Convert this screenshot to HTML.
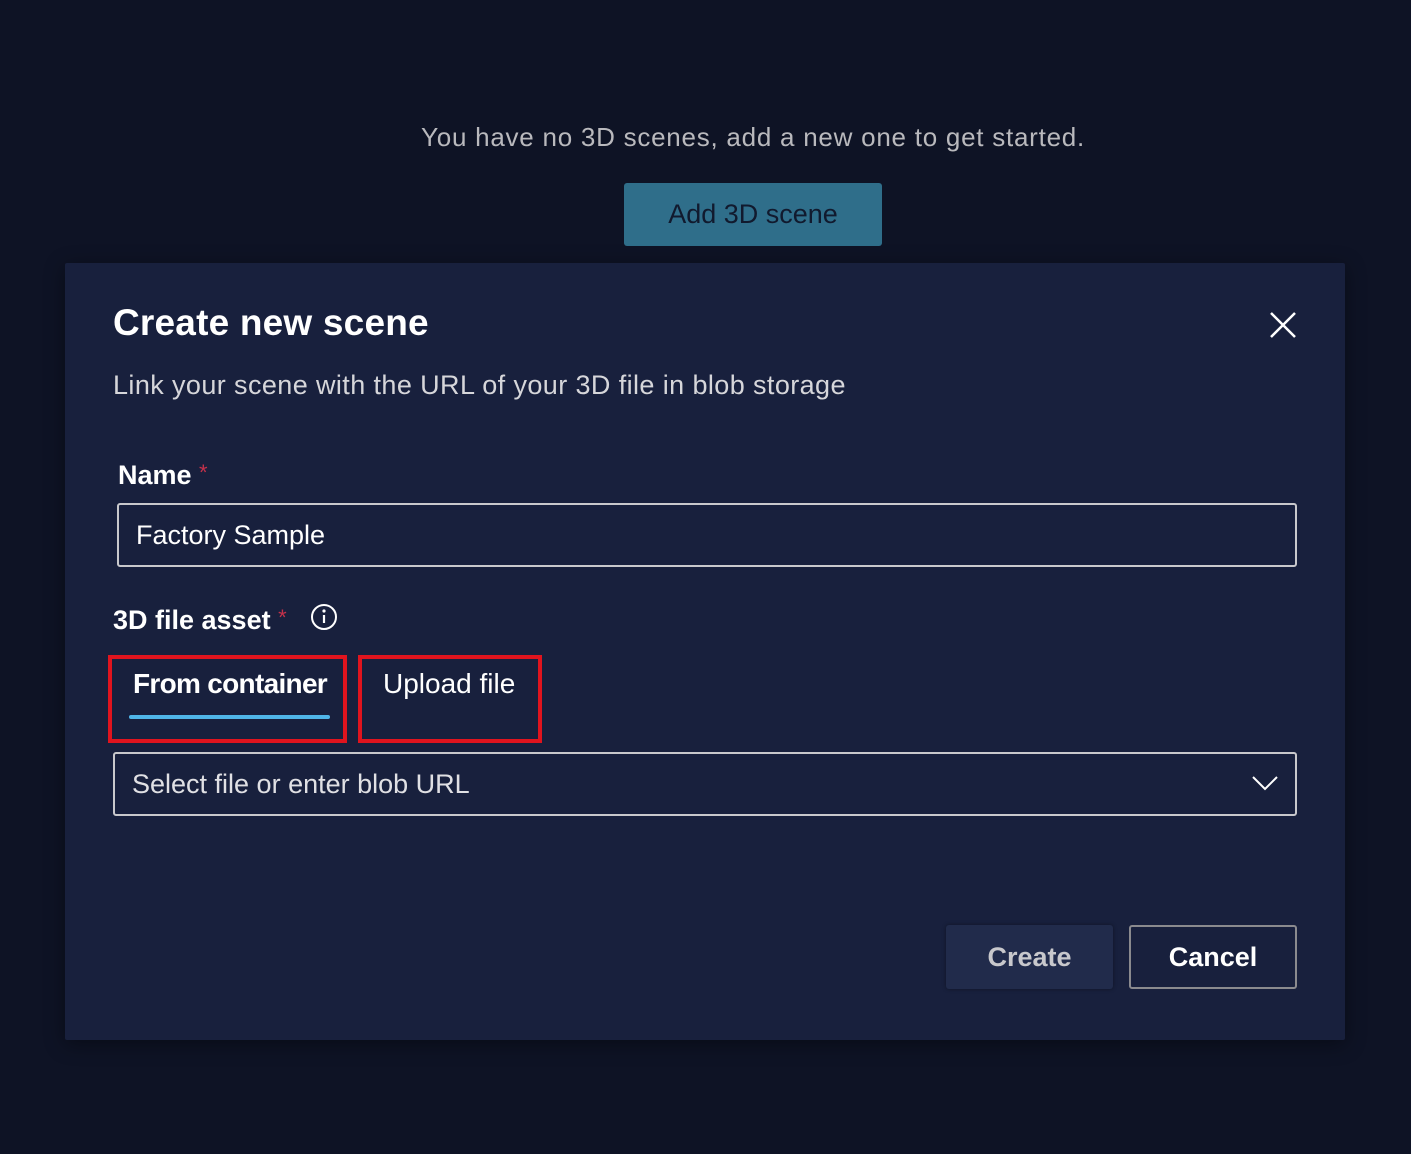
<!DOCTYPE html>
<html><head><meta charset="utf-8"><style>
*{margin:0;padding:0;box-sizing:border-box}
body{width:1411px;height:1154px;background:#0e1325;font-family:"Liberation Sans",sans-serif;position:relative;overflow:hidden;color:#fff}
.a{position:absolute}
</style></head><body>
<div class="a" style="left:0;top:122px;width:1506px;text-align:center;font-size:26px;color:#b9b9bd;letter-spacing:0.75px">You have no 3D scenes, add a new one to get started.</div>
<div class="a" style="left:624px;top:183px;width:258px;height:63px;background:#2f6e8a;border-radius:3px;text-align:center;line-height:63px;font-size:27px;color:#111a2e">Add 3D scene</div>
<div class="a" style="left:65px;top:263px;width:1280px;height:777px;background:#18203d;border-radius:2px;box-shadow:0 4px 20px rgba(0,0,0,.4)"></div>
<div class="a" style="left:113px;top:302px;font-size:37px;font-weight:bold;letter-spacing:0.2px">Create new scene</div>
<svg class="a" style="left:1268px;top:310px" width="30" height="30"><path d="M3 3L27 27M27 3L3 27" stroke="#fff" stroke-width="2.5"/></svg>
<div class="a" style="left:113px;top:370px;font-size:27px;color:#d6d6da;letter-spacing:0.4px">Link your scene with the URL of your 3D file in blob storage</div>
<div class="a" style="left:118px;top:460px;font-size:27px;font-weight:bold">Name <span style="color:#c4314b;font-weight:normal;font-size:22px;vertical-align:top">*</span></div>
<div class="a" style="left:117px;top:503px;width:1180px;height:64px;border:2px solid #c8c8cc;border-radius:3px;font-size:27px;line-height:60px;padding-left:17px">Factory Sample</div>
<div class="a" style="left:113px;top:605px;font-size:27px;font-weight:bold">3D file asset <span style="color:#c4314b;font-weight:normal;font-size:22px;vertical-align:top">*</span></div>
<svg class="a" style="left:310px;top:603px" width="28" height="28"><circle cx="14" cy="14" r="12" fill="none" stroke="#fff" stroke-width="2"/><path d="M14 12V20" stroke="#fff" stroke-width="2.2"/><circle cx="14" cy="8" r="1.6" fill="#fff"/></svg>
<div class="a" style="left:108px;top:655px;width:239px;height:88px;border:4px solid #e0141e"></div>
<div class="a" style="left:358px;top:655px;width:184px;height:88px;border:4px solid #e0141e"></div>
<div class="a" style="left:133px;top:668px;font-size:28px;font-weight:bold;letter-spacing:-0.7px">From container</div>
<div class="a" style="left:129px;top:715px;width:201px;height:4px;background:#4fb5e8;border-radius:2px"></div>
<div class="a" style="left:383px;top:668px;font-size:28px">Upload file</div>
<div class="a" style="left:113px;top:752px;width:1184px;height:64px;border:2px solid #c8c8cc;border-radius:3px;font-size:27px;line-height:60px;padding-left:17px;color:#e0e0e4">Select file or enter blob URL</div>
<svg class="a" style="left:1252px;top:775px" width="26" height="16"><path d="M1 2L13 14L25 2" fill="none" stroke="#fff" stroke-width="2"/></svg>
<div class="a" style="left:946px;top:925px;width:167px;height:64px;background:#212b4b;border-radius:3px;text-align:center;line-height:64px;font-size:27px;font-weight:bold;color:#c8c8cc;box-shadow:0 0 4px rgba(0,0,0,.4)">Create</div>
<div class="a" style="left:1129px;top:925px;width:168px;height:64px;border:2px solid #8a8a8e;border-radius:3px;text-align:center;line-height:60px;font-size:27px;font-weight:bold">Cancel</div>
</body></html>
